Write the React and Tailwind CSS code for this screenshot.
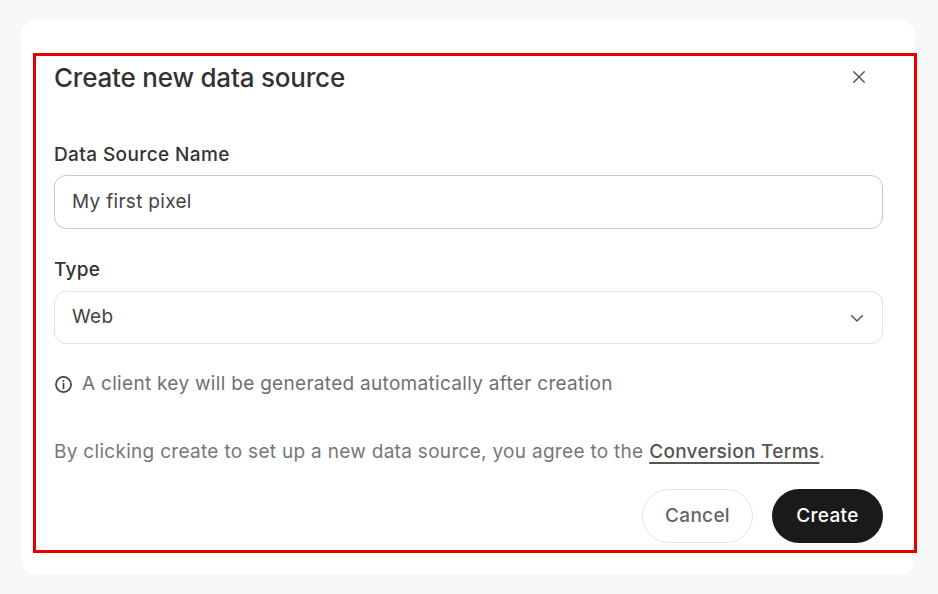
import React from "react";

const font = { fontFamily: "Inter, 'Noto Sans', sans-serif" };

function XIcon() {
  return (
    <svg width="18" height="18" viewBox="0 0 24 24" fill="none" stroke="#555" strokeWidth="2" strokeLinecap="round">
      <path d="M5 5l14 14M19 5L5 19" />
    </svg>
  );
}

function Chevron() {
  return (
    <svg width="18" height="18" viewBox="0 0 24 24" fill="none" stroke="#555" strokeWidth="2" strokeLinecap="round" strokeLinejoin="round">
      <path d="M5 9l7 7 7-7" />
    </svg>
  );
}

function InfoIcon() {
  return (
    <svg width="19" height="19" viewBox="0 0 24 24" fill="none" stroke="#444" strokeWidth="2.2">
      <circle cx="12" cy="12" r="9.5" />
      <path d="M12 11v6" strokeLinecap="round" />
      <circle cx="12" cy="7.5" r="1.2" fill="#444" stroke="none" />
    </svg>
  );
}

export default function App() {
  return (
    <div className="w-[938px] h-[594px] bg-[#f8f8f8] pt-[20px] pl-[21px] overflow-hidden" style={font}>
      <div className="w-[894px] h-[555px] bg-white rounded-[16px] pt-[33px] pl-[12px]">
        <div className="w-[884px] h-[500px] border-[3px] border-[#e60000] pl-[18px] pr-[31px] flex flex-col tracking-[0.3px]">
          <div className="flex items-center justify-between h-[42px]">
            <h1 className="text-[26px] font-medium text-[#333] tracking-[-0.2px]">Create new data source</h1>
            <button className="mr-[15px] flex items-center"><XIcon /></button>
          </div>

          <label className="mt-[45px] text-[19px] font-medium text-[#333] leading-[24px] tracking-[0.4px]">Data Source Name</label>
          <div className="mt-[8px] h-[54px] rounded-[12px] border-[1.5px] border-[#c9c9c9] flex items-center px-[17px] text-[19px] text-[#444]">
            My first pixel
          </div>

          <label className="mt-[29px] text-[19px] font-medium text-[#333] leading-[24px]">Type</label>
          <div className="mt-[9px] h-[53px] rounded-[12px] border-[1.5px] border-[#e2e2e2] flex items-center justify-between pl-[17px] pr-[16px] text-[19px] text-[#444]">
            <span>Web</span>
            <Chevron />
          </div>

          <div className="mt-[28px] flex items-center gap-[9px] text-[19px] text-[#707070] leading-[24px]">
            <InfoIcon />
            <span>A client key will be generated automatically after creation</span>
          </div>

          <p className="mt-[44px] text-[19px] text-[#777] leading-[24px]">
            By clicking create to set up a new data source, you agree to the{" "}
            <a className="text-[#555] font-medium underline underline-offset-[4px] decoration-[1.5px]">Conversion Terms</a>.
          </p>

          <div className="mt-[25px] flex justify-end gap-[19px]">
            <button className="w-[111px] h-[54px] rounded-full border-[1.5px] border-[#e4e4e4] text-[19px] text-[#666] font-medium">Cancel</button>
            <button className="w-[111px] h-[54px] rounded-full bg-[#1a1a1a] text-[19px] text-white font-medium">Create</button>
          </div>
        </div>
      </div>
    </div>
  );
}
